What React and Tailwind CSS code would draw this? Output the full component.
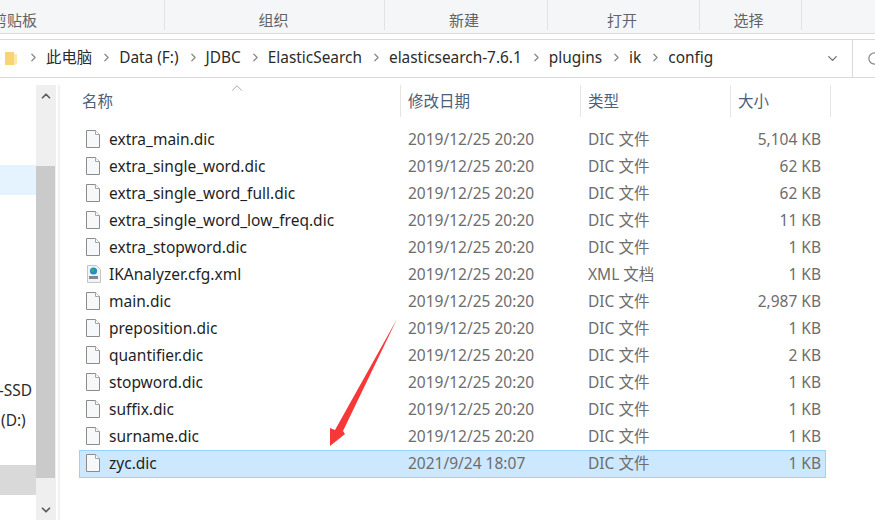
import { ChevronRight, ChevronDown, ChevronUp, RotateCw } from "lucide-react";

const files = [
  ["extra_main.dic", "2019/12/25 20:20", "DIC 文件", "5,104 KB"],
  ["extra_single_word.dic", "2019/12/25 20:20", "DIC 文件", "62 KB"],
  ["extra_single_word_full.dic", "2019/12/25 20:20", "DIC 文件", "62 KB"],
  ["extra_single_word_low_freq.dic", "2019/12/25 20:20", "DIC 文件", "11 KB"],
  ["extra_stopword.dic", "2019/12/25 20:20", "DIC 文件", "1 KB"],
  ["IKAnalyzer.cfg.xml", "2019/12/25 20:20", "XML 文档", "1 KB", true],
  ["main.dic", "2019/12/25 20:20", "DIC 文件", "2,987 KB"],
  ["preposition.dic", "2019/12/25 20:20", "DIC 文件", "1 KB"],
  ["quantifier.dic", "2019/12/25 20:20", "DIC 文件", "2 KB"],
  ["stopword.dic", "2019/12/25 20:20", "DIC 文件", "1 KB"],
  ["suffix.dic", "2019/12/25 20:20", "DIC 文件", "1 KB"],
  ["surname.dic", "2019/12/25 20:20", "DIC 文件", "1 KB"],
  ["zyc.dic", "2021/9/24 18:07", "DIC 文件", "1 KB"],
];

const ribbon = [
  ["w-[165px] justify-end pr-[127px]", "剪贴板"],
  ["w-[220px] justify-center pr-[2px]", "组织"],
  ["w-[163px] justify-center pr-[4px]", "新建"],
  ["w-[152px] justify-center pr-[3px]", "打开"],
  ["w-[102px] justify-center pr-[4px]", "选择"],
];

const crumbs = ["此电脑", "Data (F:)", "JDBC", "ElasticSearch", "elasticsearch-7.6.1", "plugins", "ik", "config"];

const FileIcon = () => (
  <svg width="16" height="18" viewBox="0 0 16 18" className="shrink-0">
    <path d="M1.5.5h9l4 4v13h-13z" fill="#f7f8f9" stroke="#8c8c8c" />
    <path d="M10.5.5v4h4" fill="#fff" stroke="#a5a5a5" />
  </svg>
);

const XmlIcon = () => (
  <svg width="18" height="18" viewBox="0 0 18 18" className="shrink-0">
    <path d="M2.5.5h9l4 4v13h-13z" fill="#f3f4f5" stroke="#c5c5c5" />
    <circle cx="8.5" cy="6" r="3.6" fill="#1f8fc4" />
    <circle cx="7.6" cy="5.2" r="1.5" fill="#4caf50" />
    <rect x="4" y="11" width="9" height="3" fill="#7d8a96" />
  </svg>
);

export default function App() {
  return (
    <div className="w-[875px] h-[520px] overflow-hidden bg-white text-[15.5px] leading-[20px] font-['Noto_Sans','Noto_Sans_CJK_SC',sans-serif]">
      {/* ribbon */}
      <div className="h-[34px] bg-[#f5f6f7] border-b border-[#dadbdc] flex text-[#5f6468] overflow-hidden text-[15px]">
        {ribbon.map(([cls, label]) => (
          <div key={label} className={`${cls} shrink-0 h-[30px] pt-[10px] border-r border-[#e1e2e3] whitespace-nowrap flex`}>
            {label}
          </div>
        ))}
      </div>

      {/* address bar */}
      <div className="mt-[5px] h-[39px] border-y border-[#d9d9d9] flex items-center text-[#2b2b2b]">
        <svg width="13" height="15" viewBox="0 0 13 15" className="ml-[4px] shrink-0">
          <path d="M1 1h9v13H1z" fill="#f7d574" />
          <path d="M10 3h3v10l-3 1z" fill="#fbe9a6" />
        </svg>
        <div className="flex items-center ml-[10px] text-[15.4px]">
          {crumbs.map((c) => (
            <div key={c} className="flex items-center whitespace-nowrap">
              <ChevronRight size={13} strokeWidth={2.4} className="text-[#8a8a8a] mr-[6px] mb-[2px]" />
              <span className="mr-[8px] mb-[1px]">{c}</span>
            </div>
          ))}
        </div>
        <ChevronDown size={15} strokeWidth={2} className="text-[#6d6d6d] ml-auto mr-[12px]" />
        <div className="w-[23px] h-full border-l border-[#d9d9d9] flex items-center pl-[14px] shrink-0 overflow-hidden">
          <RotateCw size={15} className="text-[#8a8a8a] shrink-0" />
        </div>
      </div>

      <div className="flex h-[442px]">
        {/* nav pane */}
        <div className="w-[36px] shrink-0 relative text-[#2b2b2b] flex flex-col items-end">
          <div className="h-[87px] shrink-0" />
          <div className="w-full h-[30px] shrink-0 bg-[#e5f3ff]" />
          <div className="h-[180px] shrink-0" />
          <div className="whitespace-nowrap h-[30px] shrink-0 leading-[30px] pr-[4px]">-SSD</div>
          <div className="whitespace-nowrap h-[31px] shrink-0 leading-[31px] w-full pl-[1px]">(D:)</div>
          <div className="h-[29px] shrink-0" />
          <div className="w-full h-[30px] shrink-0 bg-[#d9d9d9]" />
        </div>
        {/* scrollbar */}
        <div className="w-[20px] shrink-0 mt-[7px] flex flex-col bg-[#efefef] items-start">
          <div className="h-[81px] w-full flex justify-center pt-[4px]">
            <ChevronUp size={14} strokeWidth={3} className="text-[#5c5c5c]" />
          </div>
          <div className="h-[312px] w-[19px] bg-[#cacaca]" />
          <div className="flex-1 w-full flex justify-center pt-[25px]">
            <ChevronDown size={14} strokeWidth={3} className="text-[#5c5c5c]" />
          </div>
        </div>
        <div className="w-[2px] ml-[2px] mt-[7px] bg-[#f1f1f1] shrink-0" />

        {/* file list */}
        <div className="flex-1 relative pl-[19px] mt-[7px]">
          <div className="flex h-[32px] text-[#4c607a] relative">
            <div className="w-[322px] h-full border-r border-[#e5e5e5] pl-[3px] pt-[6px]">名称</div>
            <div className="w-[180px] h-full border-r border-[#e5e5e5] pl-[7px] pt-[6px]">修改日期</div>
            <div className="w-[150px] h-full border-r border-[#e5e5e5] pl-[7px] pt-[6px]">类型</div>
            <div className="w-[100px] h-full border-r border-[#e5e5e5] pl-[7px] pt-[6px]">大小</div>
            <ChevronUp size={18} strokeWidth={1} className="absolute left-[149px] -top-[6px] text-[#8a8a8a]" />
          </div>
          <div className="mt-[9px] w-[747px]">
            {files.map(([name, date, type, size, xml], i) => {
              const selected = i === files.length - 1;
              return (
                <div
                  key={name}
                  className={`flex items-center pb-[2px] text-[#6d6d6d] border ${selected ? "h-[28px] bg-[#cce8ff] border-[#99d1ff]" : "h-[27px] border-transparent"}`}
                >
                  <div className="w-[321px] flex items-center pl-[5px] text-[#1f1f1f] whitespace-nowrap">
                    <div className="w-[24px] shrink-0">{xml ? <XmlIcon /> : <FileIcon />}</div>
                    {name}
                  </div>
                  <div className="w-[180px] pl-[7px] whitespace-nowrap">{date}</div>
                  <div className="w-[150px] pl-[7px] whitespace-nowrap">{type}</div>
                  <div className="w-[90px] text-right whitespace-nowrap">{size}</div>
                </div>
              );
            })}
          </div>
          {/* annotation arrow */}
          <svg className="absolute left-[270px] top-[234px]" width="70" height="130" viewBox="330 319 70 130">
            <path d="M397 319 343 431 345 434 330 446 330 428 335 430Z" fill="#f73838" />
          </svg>
        </div>
      </div>
    </div>
  );
}
